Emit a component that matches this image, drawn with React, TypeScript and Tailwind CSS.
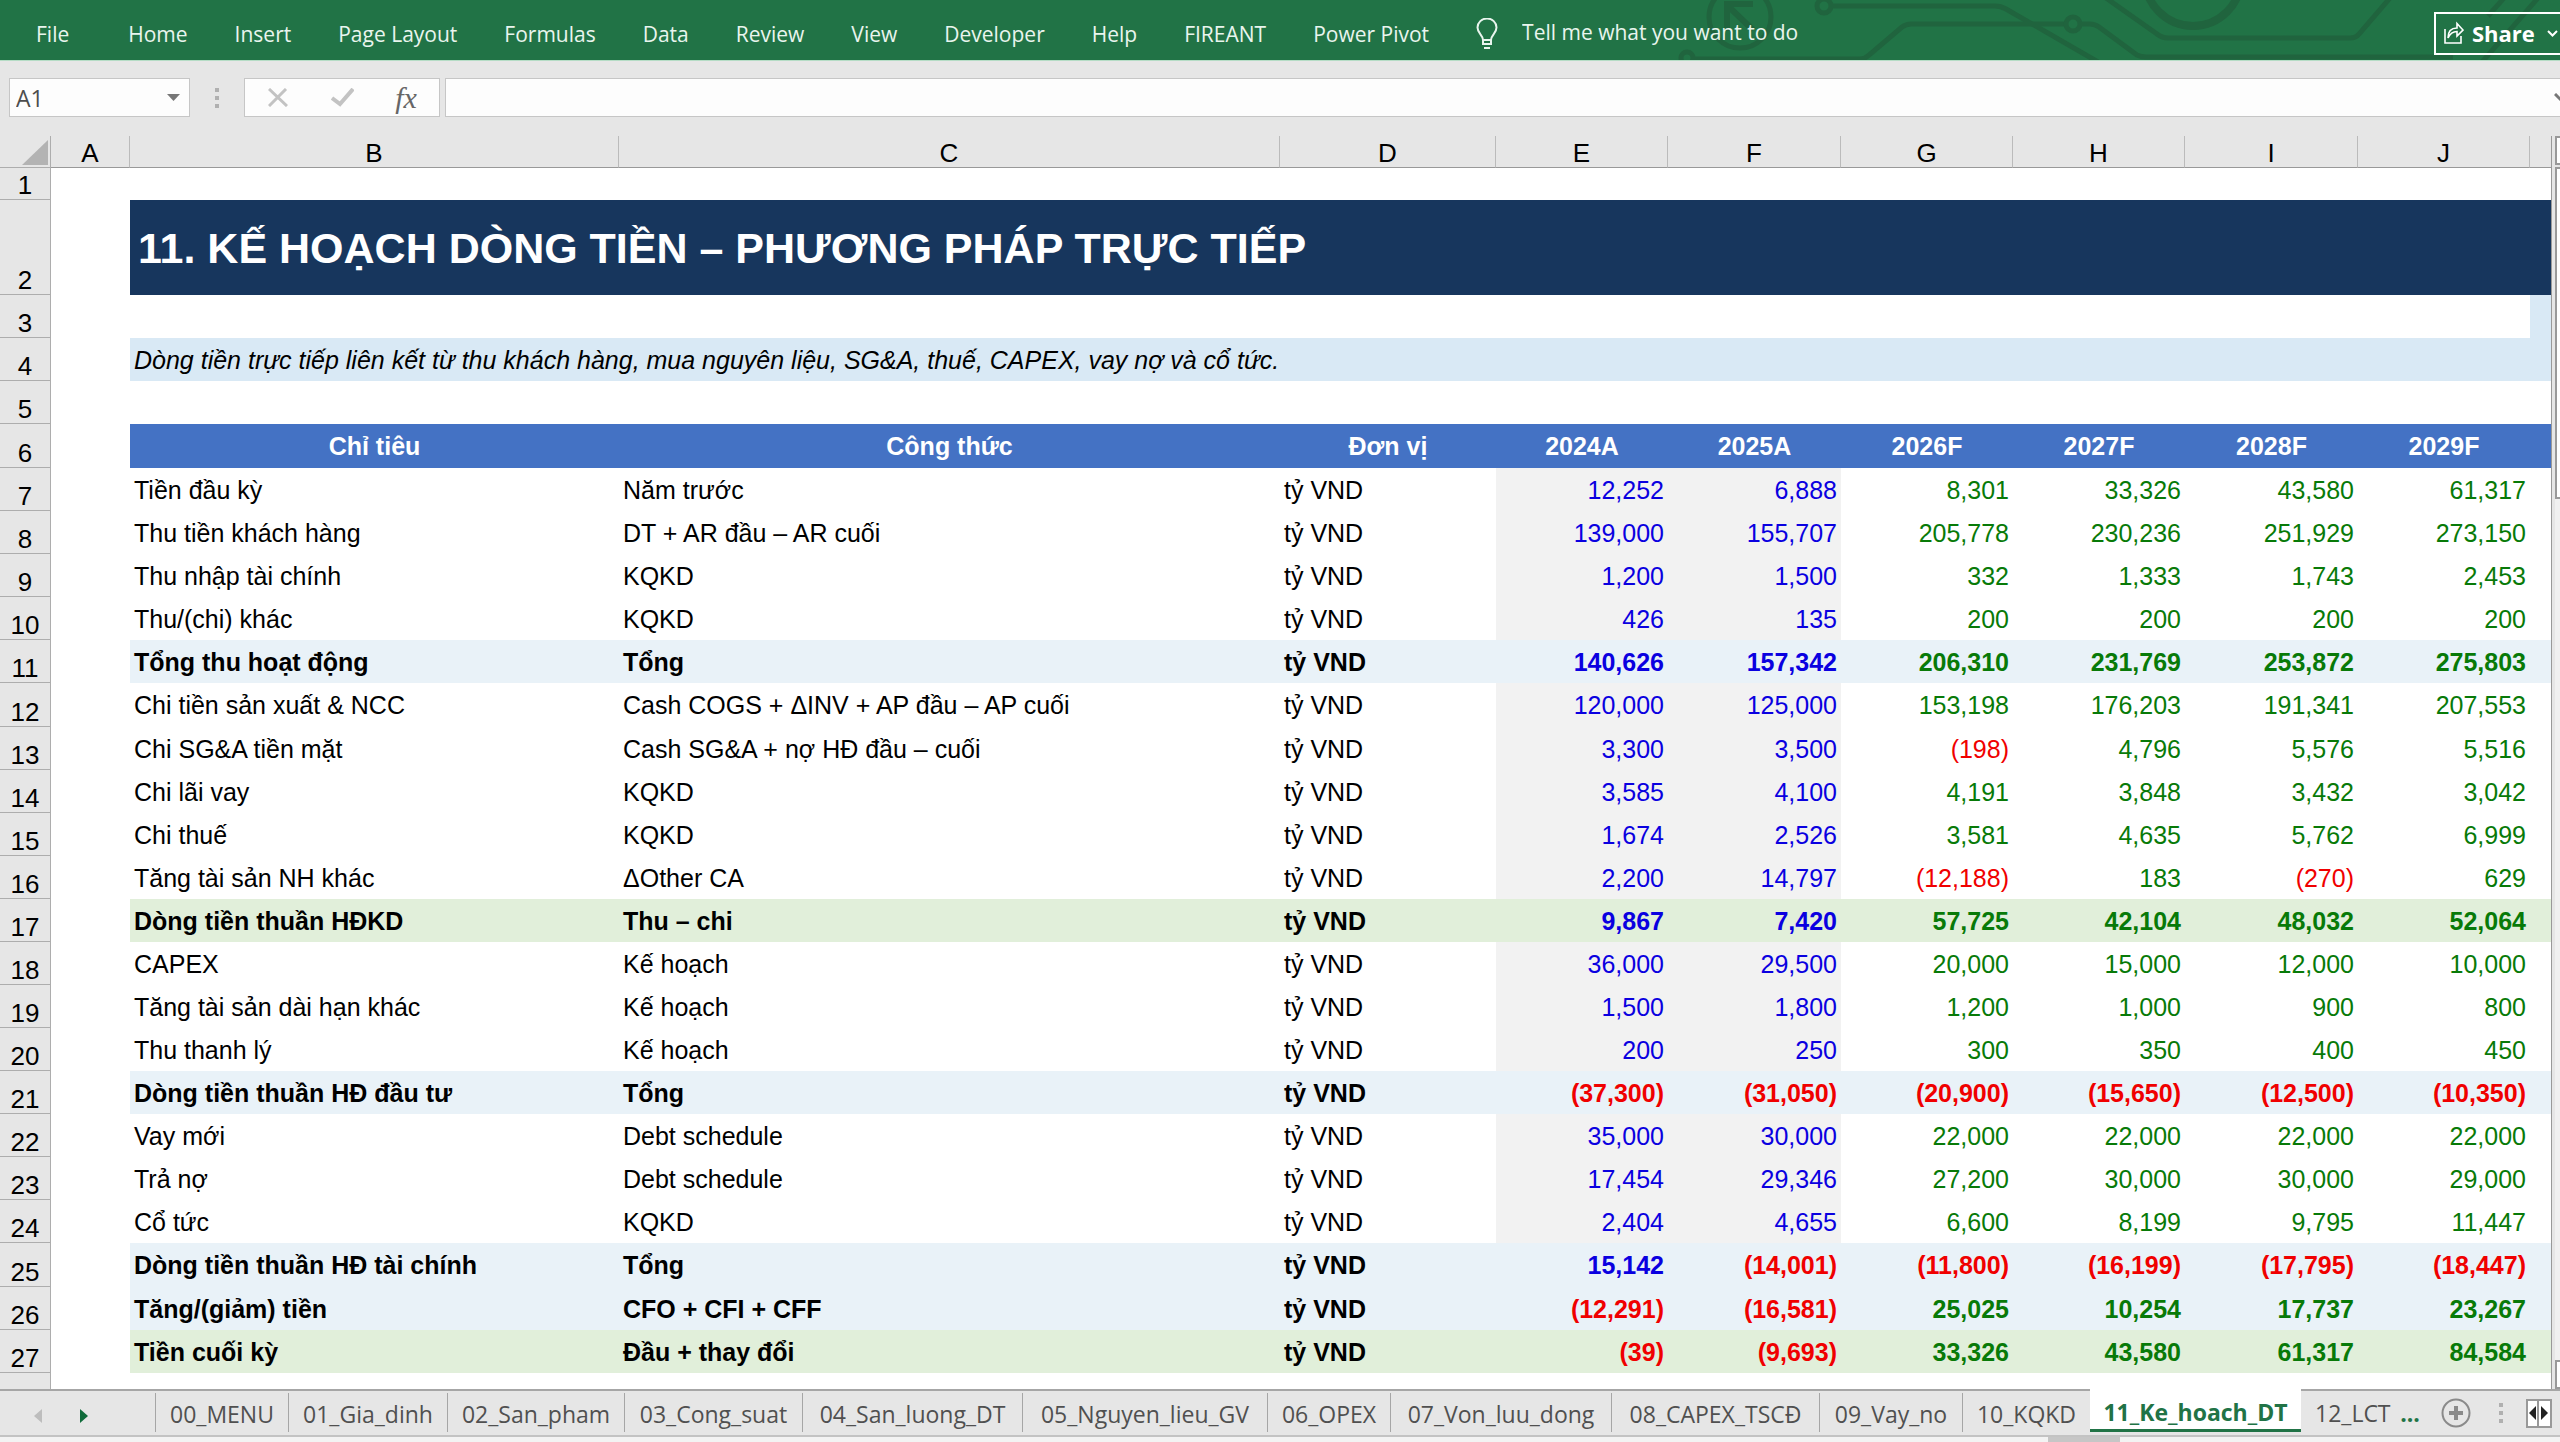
import React from "react";
import clsx from "clsx";

interface LineItem {
  row: number;
  label: string;
  formula: string;
  values: string[];
  kind?: "total" | "result";
  tall?: boolean;
}

const menus = [
  "File",
  "Home",
  "Insert",
  "Page Layout",
  "Formulas",
  "Data",
  "Review",
  "View",
  "Developer",
  "Help",
  "FIREANT",
  "Power Pivot",
];

const columns = ["A", "B", "C", "D", "E", "F", "G", "H", "I", "J"];

const years = ["2024A", "2025A", "2026F", "2027F", "2028F", "2029F"];

const items: LineItem[] = [
  { row: 7, label: "Tiền đầu kỳ", formula: "Năm trước", values: ["12,252", "6,888", "8,301", "33,326", "43,580", "61,317"] },
  { row: 8, label: "Thu tiền khách hàng", formula: "DT + AR đầu – AR cuối", values: ["139,000", "155,707", "205,778", "230,236", "251,929", "273,150"] },
  { row: 9, label: "Thu nhập tài chính", formula: "KQKD", values: ["1,200", "1,500", "332", "1,333", "1,743", "2,453"] },
  { row: 10, label: "Thu/(chi) khác", formula: "KQKD", values: ["426", "135", "200", "200", "200", "200"] },
  { row: 11, label: "Tổng thu hoạt động", formula: "Tổng", values: ["140,626", "157,342", "206,310", "231,769", "253,872", "275,803"], kind: "total" },
  { row: 12, label: "Chi tiền sản xuất & NCC", formula: "Cash COGS + ΔINV + AP đầu – AP cuối", values: ["120,000", "125,000", "153,198", "176,203", "191,341", "207,553"], tall: true },
  { row: 13, label: "Chi SG&A tiền mặt", formula: "Cash SG&A + nợ HĐ đầu – cuối", values: ["3,300", "3,500", "(198)", "4,796", "5,576", "5,516"] },
  { row: 14, label: "Chi lãi vay", formula: "KQKD", values: ["3,585", "4,100", "4,191", "3,848", "3,432", "3,042"] },
  { row: 15, label: "Chi thuế", formula: "KQKD", values: ["1,674", "2,526", "3,581", "4,635", "5,762", "6,999"] },
  { row: 16, label: "Tăng tài sản NH khác", formula: "ΔOther CA", values: ["2,200", "14,797", "(12,188)", "183", "(270)", "629"] },
  { row: 17, label: "Dòng tiền thuần HĐKD", formula: "Thu – chi", values: ["9,867", "7,420", "57,725", "42,104", "48,032", "52,064"], kind: "result" },
  { row: 18, label: "CAPEX", formula: "Kế hoạch", values: ["36,000", "29,500", "20,000", "15,000", "12,000", "10,000"] },
  { row: 19, label: "Tăng tài sản dài hạn khác", formula: "Kế hoạch", values: ["1,500", "1,800", "1,200", "1,000", "900", "800"] },
  { row: 20, label: "Thu thanh lý", formula: "Kế hoạch", values: ["200", "250", "300", "350", "400", "450"] },
  { row: 21, label: "Dòng tiền thuần HĐ đầu tư", formula: "Tổng", values: ["(37,300)", "(31,050)", "(20,900)", "(15,650)", "(12,500)", "(10,350)"], kind: "total" },
  { row: 22, label: "Vay mới", formula: "Debt schedule", values: ["35,000", "30,000", "22,000", "22,000", "22,000", "22,000"] },
  { row: 23, label: "Trả nợ", formula: "Debt schedule", values: ["17,454", "29,346", "27,200", "30,000", "30,000", "29,000"] },
  { row: 24, label: "Cổ tức", formula: "KQKD", values: ["2,404", "4,655", "6,600", "8,199", "9,795", "11,447"] },
  { row: 25, label: "Dòng tiền thuần HĐ tài chính", formula: "Tổng", values: ["15,142", "(14,001)", "(11,800)", "(16,199)", "(17,795)", "(18,447)"], kind: "total", tall: true },
  { row: 26, label: "Tăng/(giảm) tiền", formula: "CFO + CFI + CFF", values: ["(12,291)", "(16,581)", "25,025", "10,254", "17,737", "23,267"], kind: "total" },
  { row: 27, label: "Tiền cuối kỳ", formula: "Đầu + thay đổi", values: ["(39)", "(9,693)", "33,326", "43,580", "61,317", "84,584"], kind: "result" },
];

const sheets = [
  { name: "00_MENU", width: "w-[133px]" },
  { name: "01_Gia_dinh", width: "w-[159px]" },
  { name: "02_San_pham", width: "w-[177px]" },
  { name: "03_Cong_suat", width: "w-[178px]" },
  { name: "04_San_luong_DT", width: "w-[220px]" },
  { name: "05_Nguyen_lieu_GV", width: "w-[245px]" },
  { name: "06_OPEX", width: "w-[123px]" },
  { name: "07_Von_luu_dong", width: "w-[221px]" },
  { name: "08_CAPEX_TSCĐ", width: "w-[208px]" },
  { name: "09_Vay_no", width: "w-[143px]" },
  { name: "10_KQKD", width: "w-[128px]" },
  { name: "11_Ke_hoach_DT", width: "w-[211px]" },
];

export default function App() {
  return (
    <div className="min-h-screen flex flex-col overflow-hidden bg-[#e6e6e6] font-['Open_Sans',sans-serif]">
      <Ribbon />
      <FormulaBar />
      <main className="flex">
        <Sheet />
        <ScrollBar />
      </main>
      <SheetTabs />
      <div className="flex flex-1 min-h-1 bg-[#f3f3f3]">
        <div className="w-4/5" />
        <div className="w-[72px] bg-[#c6c6c6]" />
      </div>
    </div>
  );
}

function Ribbon() {
  return (
    <header className="relative flex items-center h-[60px] bg-[#217346] text-[21px] text-[#e9f5ee]">
      <Circuit />
      <nav className="relative flex pl-3 pt-2">
        {menus.map((menu) => (
          <button key={menu} className="pl-6 pr-[23px] first:mr-3 leading-7 whitespace-nowrap">
            {menu}
          </button>
        ))}
      </nav>
      <label htmlFor="tell-me" className="relative pl-6 pt-2">
        <svg className="w-[22px] h-[32px]" viewBox="0 0 22 32" fill="none" stroke="#e9f5ee" strokeWidth="2">
          <path d="M7 22c0-5-5.500-6.500-5.500-12.500a9.500 9 0 0 1 19 0C20.500 15.500 15 17 15 22zM7 22v4h8v-4M8 30h6" />
        </svg>
      </label>
      <input
        id="tell-me"
        className="relative ml-6 mt-1.5 w-[300px] bg-transparent outline-none placeholder:text-[#e9f5ee] placeholder:opacity-100"
        placeholder="Tell me what you want to do"
      />
      <button className="relative ml-auto mt-1.5 flex items-center h-[43px] w-[126px] pl-2 border-2 border-r-0 border-white text-white text-[22px] font-bold">
        <svg className="w-[20px] h-[24px] mr-2" viewBox="0 0 20 24" fill="none" stroke="white" strokeWidth="1.600">
          <path d="M1 8v14h16v-7" />
          <path d="M4 17c0-7 3-10 9-10V2.500l6 6.500-6 6v-4.500c-4 0-7 2-9 6.500z" />
        </svg>
        Share
        <svg className="w-[11px] h-[7px] ml-3" viewBox="0 0 11 7" fill="none" stroke="white" strokeWidth="2">
          <path d="M1 1l4.500 4.500L10 1" />
        </svg>
      </button>
    </header>
  );
}

// decorative traces on the right half of the ribbon
function Circuit() {
  return (
    <svg className="absolute right-0 top-0 w-[900px] h-[60px]" viewBox="1660 0 900 60" fill="none" stroke="#20643e" strokeWidth="5">
      <circle cx="1740" cy="17" r="31" />
      <path d="M1753 4h-26v27M1728 6l25 24" strokeWidth="6" />
      <circle cx="1824" cy="6" r="7" />
      <path d="M1832 6h163q6 0 11 3l92 53" />
      <circle cx="1687" cy="58" r="6" />
      <path d="M1694 59h166q5 0 9-4l33-28q4-3 9-3h154" />
      <circle cx="2073" cy="24" r="7" />
      <path d="M2081 24h9q5 0 9 3l38 28q4 2 9 2h307" />
      <path d="M2106-2l51 36q5 4 11 4h182q6 0 9-4l31-36" />
      <circle cx="2193" cy="-22" r="48" strokeWidth="8" />
      <path d="M2504-2l-16 18M2538-2l-56 64" />
    </svg>
  );
}

function Dots() {
  return (
    <div className="flex flex-col gap-1 w-1">
      <span className="h-1 bg-[#b0b0b0]" />
      <span className="h-1 bg-[#b0b0b0]" />
      <span className="h-1 bg-[#b0b0b0]" />
    </div>
  );
}

function FormulaBar() {
  return (
    <div className="flex items-start h-[76px] pt-[17px] pl-[9px] border-t border-[#b5dcc5] overflow-hidden">
      <div className="flex items-center w-[181px] h-[39px] bg-[#fdfdfd] border border-[#c6c6c6]">
        <input aria-label="Name Box" defaultValue="A1" className="w-[157px] pt-0.5 pl-1.5 text-[23px] text-[#4d4d4d] bg-transparent outline-none" />
        <button aria-label="Name list">
          <svg className="w-[13px] h-[7px]" viewBox="0 0 13 7" fill="#777">
            <path d="M0 0h13L6.500 7z" />
          </svg>
        </button>
      </div>
      <div className="flex items-center justify-center w-[54px] h-[39px]">
        <Dots />
      </div>
      <div className="flex items-center w-[196px] h-[39px] bg-[#fdfdfd] border border-[#c6c6c6]">
        <button aria-label="Cancel" className="flex justify-center w-[65px]">
          <svg className="w-[20px] h-[19px]" viewBox="0 0 20 19" fill="none" stroke="#c3c3c3" strokeWidth="3">
            <path d="M1 1l18 17M18 1L1 18" />
          </svg>
        </button>
        <button aria-label="Enter" className="flex justify-center w-[65px]">
          <svg className="w-[23px] h-[19px]" viewBox="0 0 23 19" fill="none" stroke="#c3c3c3" strokeWidth="4">
            <path d="M1 10l8 6L22 1" />
          </svg>
        </button>
        <button aria-label="Insert Function" className="w-[62px] leading-8 text-[30px] text-[#666] italic font-['Liberation_Serif',serif]">
          fx
        </button>
      </div>
      <div className="flex flex-1 items-center ml-[5px] h-[39px] bg-[#fdfdfd] border border-r-0 border-[#c6c6c6]">
        <input aria-label="Formula" className="flex-1 h-full px-2 text-[22px] bg-transparent outline-none" />
        <button aria-label="Expand formula bar" className="w-[6px] overflow-hidden">
          <svg className="w-[14px] h-[9px]" viewBox="0 0 14 9" fill="none" stroke="#777" strokeWidth="3">
            <path d="M1 1l6 6 6-6" />
          </svg>
        </button>
      </div>
    </div>
  );
}

function RowHead({ children }: { children?: React.ReactNode }) {
  return (
    <th scope="row" className="p-0 pb-px align-bottom text-center text-[26px] leading-[26px] font-normal text-black bg-[#e6e6e6] border-r border-b border-[#adadad]">
      {children}
    </th>
  );
}

function Sheet() {
  return (
    <div className="flex-1 min-w-0 border-r border-[#999]">
      <table className="w-full table-fixed border-separate border-spacing-0 bg-white text-black text-[25px] leading-7 whitespace-nowrap font-['Liberation_Sans',Arial,sans-serif]">
        <colgroup>
          <col className="w-[51px]" />
          <col className="w-[79px]" />
          <col className="w-[489px]" />
          <col className="w-[661px]" />
          <col className="w-[216px]" />
          <col className="w-[172px]" />
          <col className="w-[173px]" />
          <col className="w-[172px]" />
          <col className="w-[172px]" />
          <col className="w-[173px]" />
          <col className="w-[172px]" />
          <col />
        </colgroup>
        <thead>
          <tr className="h-8 bg-[#e6e6e6]">
            <td className="p-0 align-bottom border-r border-b border-[#adadad]">
              <svg className="ml-auto mr-[2px] mb-[2px] w-[26px] h-[25px]" viewBox="0 0 26 25" fill="#b3b3b3">
                <path d="M26 0v25H0z" />
              </svg>
            </td>
            {columns.map((col) => (
              <th key={col} scope="col" className="p-0 pb-px align-bottom text-[26px] leading-[26px] font-normal border-r border-b border-r-[#bbb] border-b-[#999]">
                {col}
              </th>
            ))}
            <td className="p-0 border-b border-[#999]" />
          </tr>
        </thead>
        <tbody>
          <tr className="h-8">
            <RowHead>1</RowHead>
            <td colSpan={11} />
          </tr>
          <tr className="h-[95px]">
            <RowHead>2</RowHead>
            <td />
            <td colSpan={10} className="p-0 pl-2 bg-[#17365d] text-white">
              <h1 className="text-[43px] leading-[48px] font-bold">11. KẾ HOẠCH DÒNG TIỀN – PHƯƠNG PHÁP TRỰC TIẾP</h1>
            </td>
          </tr>
          <tr className="h-[43px]">
            <RowHead>3</RowHead>
            <td colSpan={10} />
            <td className="bg-[#d9e9f5]" />
          </tr>
          <tr className="h-[43px]">
            <RowHead>4</RowHead>
            <td />
            <td colSpan={10} className="p-0 pl-1 bg-[#d9e9f5] italic">
              Dòng tiền trực tiếp liên kết từ thu khách hàng, mua nguyên liệu, SG&amp;A, thuế, CAPEX, vay nợ và cổ tức.
            </td>
          </tr>
          <tr className="h-[43px]">
            <RowHead>5</RowHead>
            <td colSpan={11} />
          </tr>
          <tr className="h-[44px] text-white">
            <RowHead>6</RowHead>
            <td />
            {["Chỉ tiêu", "Công thức", "Đơn vị", ...years].map((title) => (
              <th key={title} scope="col" className="p-0 bg-[#4472c4] font-bold">
                {title}
              </th>
            ))}
            <td className="bg-[#4472c4]" />
          </tr>
          {items.map((item) => (
            <ItemRow key={item.row} item={item} />
          ))}
          <tr className="h-4">
            <td className="p-0 bg-[#e6e6e6] border-r border-[#adadad]" />
            <td colSpan={11} />
          </tr>
        </tbody>
      </table>
    </div>
  );
}

function ItemRow({ item }: { item: LineItem }) {
  const fill = clsx(
    item.kind === "total" && "bg-[#e9f2f8]",
    item.kind === "result" && "bg-[#e1efda]"
  );
  return (
    <tr className={clsx(item.tall ? "h-[44px]" : "h-[43px]", item.kind && "font-bold")}>
      <RowHead>{item.row}</RowHead>
      <td />
      <td className={clsx("p-0 pl-1", fill)}>{item.label}</td>
      <td className={clsx("p-0 pl-1", fill)}>{item.formula}</td>
      <td className={clsx("p-0 pl-1", fill)}>tỷ VND</td>
      {item.values.map((value, i) => (
        <td
          key={i}
          className={clsx(
            "p-0 pr-1 text-right",
            item.kind ? fill : i < 2 && "bg-[#f2f2f2]",
            value.startsWith("(") ? "text-[#f00000]" : i < 2 ? "text-[#0a00e0]" : "text-[#087a08]"
          )}
        >
          {value}
        </td>
      ))}
      <td className={fill} />
    </tr>
  );
}

function ScrollBar() {
  return (
    <div className="flex flex-col w-[8px] pl-[3px] bg-[#e6e6e6]">
      <button aria-label="Scroll up" className="h-[29px] bg-white border-2 border-r-0 border-[#999]" />
      <div className="mt-0.5 h-[332px] bg-white border-2 border-r-0 border-[#999]" />
      <div className="flex-1 bg-[#f0f0f0]" />
      <button aria-label="Scroll down" className="h-[29px] bg-white border-2 border-r-0 border-[#999]" />
    </div>
  );
}

function SheetTabs() {
  return (
    <footer className="flex h-[48px] border-b-2 border-[#c3c3c3] text-[23px] leading-7 text-[#505050] whitespace-nowrap">
      <div className="flex w-[155px] pl-[34px] gap-[38px] pt-3.5 border-t-2 border-[#a6a6a6]">
        <button aria-label="Previous sheet" className="h-[22px]">
          <svg className="w-[8px] h-[14px]" viewBox="0 0 8 14" fill="#bdbdbd">
            <path d="M8 0v14L0 7z" />
          </svg>
        </button>
        <button aria-label="Next sheet" className="h-[22px]">
          <svg className="w-[8px] h-[14px]" viewBox="0 0 8 14" fill="#0f6b3a">
            <path d="M0 0v14l8-7z" />
          </svg>
        </button>
      </div>
      {sheets.map((sheet, i) =>
        i === sheets.length - 1 ? (
          <button key={sheet.name} className={clsx(sheet.width, "shrink-0 h-[43px] pt-1.5 bg-white border-b-3 border-[#217346] font-bold text-[#217346]")}>
            {sheet.name}
          </button>
        ) : (
          <div key={sheet.name} className="shrink-0 h-[43px] pt-0.5 border-t-2 border-[#a6a6a6]">
            <button className={clsx(sheet.width, "h-full pt-0.5 border-l border-[#a6a6a6]")}>{sheet.name}</button>
          </div>
        )
      )}
      <div className="flex flex-1 items-center pl-3.5 border-t-2 border-[#a6a6a6]">
        <button className="w-[76px] text-left">12_LCT</button>
        <button aria-label="More sheets" className="ml-2 w-[22px] font-bold text-[#217346]">
          ...
        </button>
        <button aria-label="New sheet" className="ml-5">
          <svg className="w-[30px] h-[30px]" viewBox="0 0 30 30" fill="none" stroke="#8a8a8a">
            <circle cx="15" cy="15" r="13.500" strokeWidth="2" />
            <path d="M15 8v14M8 15h14" strokeWidth="4" />
          </svg>
        </button>
        <div className="ml-7 mr-auto">
          <Dots />
        </div>
        <div className="flex mr-2 h-[29px] border-2 border-[#999] bg-white">
          <button aria-label="Scroll left" className="w-[11px] flex items-center justify-center border-r-2 border-[#999]">
            <svg className="w-[7px] h-[14px]" viewBox="0 0 7 14" fill="#222">
              <path d="M7 0v14L0 7z" />
            </svg>
          </button>
          <button aria-label="Scroll right" className="w-[11px] flex items-center justify-center">
            <svg className="w-[7px] h-[14px]" viewBox="0 0 7 14" fill="#222">
              <path d="M0 0v14l7-7z" />
            </svg>
          </button>
        </div>
      </div>
    </footer>
  );
}
